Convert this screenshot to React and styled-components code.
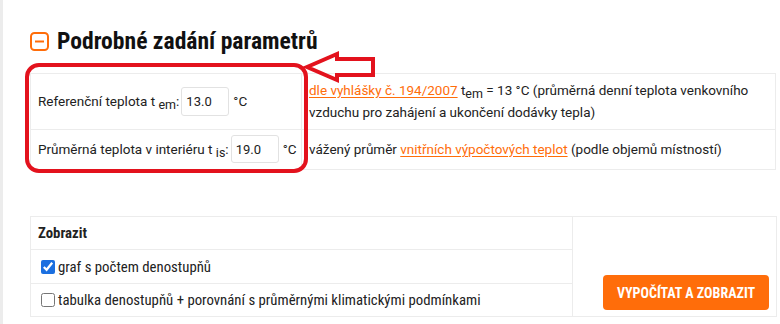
import React from "react";
import styled, { createGlobalStyle } from "styled-components";

const Global = createGlobalStyle`
  html, body { margin: 0; padding: 0; background: #fff; }
  body { font-family: Roboto, "Noto Sans", Arial, sans-serif; color: #212121; }
`;

const ORANGE = "#ff6d0a";
const BORDER = "#ececec";

const Page = styled.div`
  position: relative;
  width: 780px;
  height: 324px;
  box-sizing: border-box;
  border-left: 3px solid #ececec;
  padding: 26px 4px 0 27px;
  overflow: hidden;
`;

const Heading = styled.h2`
  display: flex;
  align-items: center;
  gap: 8px;
  margin: 0 0 17px 0;
  height: 30px;
  font-family: "Roboto Condensed", Roboto, sans-serif;
  font-stretch: condensed;
  font-weight: 700;
  font-size: 23.6px;
  color: #111;
`;

const ToggleIcon = styled.svg`
  width: 19px;
  height: 19px;
  flex: none;
`;

const ParamTable = styled.table`
  width: 746px;
  table-layout: fixed;
  border-collapse: collapse;
  font-size: 13.5px;
  color: #222;
`;

const Col = styled.col`
  width: ${(p) => p.$w};
`;

const Cell = styled.td`
  border: 1px solid ${BORDER};
  padding: 5px 7px 6px 7px;
  vertical-align: middle;
  line-height: 22px;
`;

const Field = styled.div`
  display: flex;
  align-items: center;
  white-space: nowrap;
  height: 28px;
`;

const FieldLabel = styled.span`
  display: inline-block;
`;

const Sub = styled.sub`
  font-size: 12.5px;
  vertical-align: -3px;
  line-height: 0;
`;

const NumInput = styled.input`
  box-sizing: border-box;
  width: 48px;
  height: ${(p) => p.$h || 28}px;
  margin: 0 4px 0 2px;
  padding: 0 4px;
  border: 1px solid #e2e2e2;
  border-radius: 3px;
  font-family: Roboto, sans-serif;
  font-size: 13px;
  color: #222;
  outline: none;
`;

const Link = styled.a`
  color: ${ORANGE};
  text-decoration: underline;
  text-underline-offset: 2px;
`;

const ShowTable = styled.table`
  margin-top: 46px;
  width: 747px;
  table-layout: fixed;
  border-collapse: collapse;
  font-family: "Roboto Condensed", Roboto, sans-serif;
  font-stretch: condensed;
  font-size: 14.8px;
  color: #222;
`;

const ShowCell = styled.td`
  border: 1px solid ${BORDER};
  padding: 0 7px;
  height: ${(p) => p.$h || 33}px;
  box-sizing: border-box;
  vertical-align: middle;
  white-space: nowrap;
  font-weight: ${(p) => (p.$bold ? 700 : 400)};
`;

const ActionCell = styled.td`
  border: 1px solid ${BORDER};
  padding: 0 7px 6px 0;
  vertical-align: bottom;
  text-align: right;
`;

const CheckLabel = styled.label`
  display: flex;
  align-items: center;
  gap: 3px;
  padding-left: 3px;
`;

const Check = styled.input`
  width: 14px;
  height: 14px;
  margin: 0;
  accent-color: #1b6fe0;
`;

const Button = styled.button`
  width: 166px;
  height: 35px;
  border: none;
  border-radius: 4px;
  background: ${ORANGE};
  color: #fff;
  font-family: "Roboto Condensed", Roboto, sans-serif;
  font-stretch: condensed;
  font-weight: 700;
  font-size: 14px;
  text-transform: uppercase;
  cursor: pointer;
`;

const Annotation = styled.svg`
  position: absolute;
  left: 0;
  top: 0;
  width: 780px;
  height: 324px;
  pointer-events: none;
`;

export default function App() {
  return (
    <>
      <Global />
      <Page>
        <Heading>
          <ToggleIcon viewBox="0 0 19 19">
            <rect x="1" y="1" width="17" height="17" rx="3.5" fill="none" stroke={ORANGE} strokeWidth="2" />
            <line x1="5" y1="9.5" x2="14" y2="9.5" stroke={ORANGE} strokeWidth="2" />
          </ToggleIcon>
          Podrobné zadání parametrů
        </Heading>

        <ParamTable>
          <colgroup>
            <Col $w="271px" />
            <Col $w="auto" />
          </colgroup>
          <tbody>
            <tr>
              <Cell>
                <Field>
                  <FieldLabel>
                    Referenční teplota t <Sub>em</Sub>:
                  </FieldLabel>
                  <NumInput $h={29} defaultValue="13.0" />°C
                </Field>
              </Cell>
              <Cell>
                <Link href="#">dle vyhlášky č. 194/2007</Link> t<Sub>em</Sub> = 13 °C (průměrná denní teplota venkovního
                vzduchu pro zahájení a ukončení dodávky tepla)
              </Cell>
            </tr>
            <tr>
              <Cell>
                <Field>
                  <FieldLabel>
                    Průměrná teplota v interiéru t <Sub>is</Sub>:
                  </FieldLabel>
                  <NumInput defaultValue="19.0" />°C
                </Field>
              </Cell>
              <Cell>
                vážený průměr <Link href="#">vnitřních výpočtových teplot</Link> (podle objemů místností)
              </Cell>
            </tr>
          </tbody>
        </ParamTable>

        <ShowTable>
          <colgroup>
            <Col $w="542px" />
            <Col $w="auto" />
          </colgroup>
          <tbody>
            <tr>
              <ShowCell $bold $h={33}>Zobrazit</ShowCell>
              <ActionCell rowSpan={3}>
                <Button>Vypočítat a zobrazit</Button>
              </ActionCell>
            </tr>
            <tr>
              <ShowCell $h={34}>
                <CheckLabel>
                  <Check type="checkbox" defaultChecked />
                  graf s počtem denostupňů
                </CheckLabel>
              </ShowCell>
            </tr>
            <tr>
              <ShowCell $h={33}>
                <CheckLabel>
                  <Check type="checkbox" />
                  tabulka denostupňů + porovnání s průměrnými klimatickými podmínkami
                </CheckLabel>
              </ShowCell>
            </tr>
          </tbody>
        </ShowTable>

        <Annotation viewBox="0 0 780 324">
          <rect x="24" y="65" width="279" height="106" rx="12" fill="none" stroke="#e3121d" strokeWidth="4" />
          <polygon
            points="304,67 334,54 334,59 370,59 370,75 334,75 334,80"
            fill="none"
            stroke="#e3121d"
            strokeWidth="4"
            strokeLinejoin="miter"
          />
        </Annotation>
      </Page>
    </>
  );
}
